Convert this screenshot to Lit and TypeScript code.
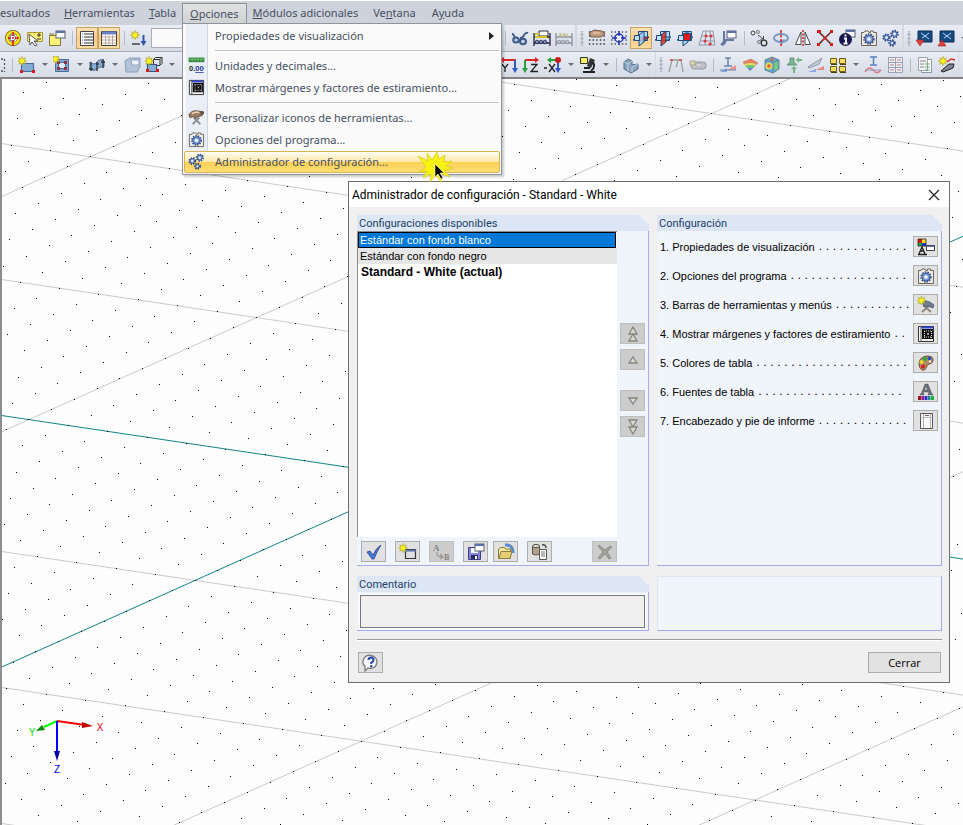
import { LitElement, html, svg, css } from "lit";
import type { TemplateResult } from "lit";
import { customElement, property } from "lit/decorators.js";
import { classMap } from "lit/directives/class-map.js";

type Art = unknown;

/* ---------- shared drawing helpers ---------- */
const gear = (x: number, y: number, r: number) => svg`
  <circle cx=${x} cy=${y} r=${r} fill="none" stroke="#2c4884" stroke-width="1.800" stroke-dasharray="1.500 1.100"/>
  <circle cx=${x} cy=${y} r=${r - 0.8} fill="#7f9bd4" stroke="#3c5a9c" stroke-width="1"/>
  <circle cx=${x} cy=${y} r=${r / 2.6} fill="#eef2fa"/>`;
const star = (x: number, y: number) => svg`
  <path transform="translate(${x} ${y})" d="M0-4.5L1-1.8 3.4-3.2 2-1 4.5 0 2 1 3.2 3.2 1 2 0 4.5-1 2-3.2 3.2-2 1-4.5 0-2-1-3.2-3.2-1-1.8z" fill="#fdf41c" stroke="#a89e20" stroke-width=".6"/>`;
const miniWindow = (x: number, y: number) => svg`
  <rect x=${x} y=${y} width="9" height="7" fill="#fff" stroke="#585e6c"/>
  <path d="M${x} ${y + 1}h9" stroke="#5c70a8" stroke-width="2"/>`;
const planes = (kind: number) => svg`
  <path d="M6.500 2.500h9v9h-9z" fill="#b8d8f4" stroke="#1d4a7c"/>
  <path d="M1 11l5-3h11l-5 4z" fill=${kind === 0 ? "#e32a1c" : "#9cc6ec"} stroke="#1d4a7c"/>
  <path d="M7 6l5-4v11l-5 4z" fill=${kind === 1 ? "#e32a1c" : "#a4cdf2"} fill-opacity=".85" stroke="#1d4a7c"/>
  <path d="M2.500 6.500h5v5h-5z" fill="#c4e0f8" stroke="#1d4a7c"/>
  ${kind === 2 ? svg`<path d="M7.500 4.500h7v7h-7z" fill="#e31818" stroke="#1d4a7c"/>` : ""}`;
const dots = (color: string) => svg`<path d="M1 3h16M1 7h16M1 11h16M1 15h16" stroke=${color} stroke-width="1.400" stroke-dasharray="1.400 2.200"/>`;
const abacus = (c: string, d: string) => svg`
  <path d="M1 4v13M17 4v13M1 8h16M1 14h16" stroke=${d} stroke-width="1.300" fill="none"/>
  <g fill=${c} stroke=${d} stroke-width=".8"><circle cx="4" cy="13" r="1.800"/><circle cx="8" cy="13" r="1.800"/><circle cx="12" cy="13" r="1.800"/></g>`;

const ICONS: Record<string, Art> = {
  target: svg`<circle cx="9" cy="9" r="6" fill="#fff" stroke="#6e5a18" stroke-width="4"/><circle cx="9" cy="9" r="6" fill="none" stroke="#fae21c" stroke-width="2.500"/><circle cx="8.500" cy="9" r="3" fill="#fff" stroke="#666"/><path d="M9 3v4M9 11v6M4 9h3M11 9h4M8 9h2" stroke="#d82020" stroke-width="1.600"/>`,
  note: svg`<path d="M1.500 3.500h15v9h-15z" fill="#fbf07a" stroke="#a89a30"/><path d="M11 6h4M13 4v4M11 10h4" stroke="#333"/><path d="M3 5l1 11 2-3 3 4 2-1-3-4h4z" fill="#fff" stroke="#555"/>`,
  folder: svg`<path d="M1.500 6.500h11v10h-11z" fill="#fbf07a" stroke="#807830"/><path d="M1 5h5" stroke="#807830"/>${miniWindow(8, 2)}`,
  list: svg`<path d="M2.500 2.500h13v14h-13z" fill="#fff" stroke="#444"/><path d="M6 5h9M6 8h9M6 11h9M6 14h9" stroke="#333"/><path d="M4 5h1M4 8h1M4 11h1M4 14h1" stroke="#37c"/>`,
  table: svg`<path d="M1.500 2.500h15v14h-15z" fill="#fff" stroke="#444"/><path d="M2 4h14" stroke="#6a84c8" stroke-width="3"/><path d="M2 8h14M2 11h14M2 14h14M5.500 6v10M9 6v10M12.500 6v10" stroke="#b09880" stroke-width=".8"/>`,
  starload: svg`${star(5, 6)}<path d="M2 15h8" stroke="#444" stroke-width="1.500"/><path d="M13.500 6v7" stroke="#2f55b0" stroke-width="2"/><path d="M10.500 12h6l-3 5z" fill="#2f55b0"/>`,
  glasses: svg`<path d="M1 5q2 0 3 4M9 9q3 0 4-3 2-3 4-2" stroke="#3e5a86" stroke-width="1.800" fill="none"/><ellipse cx="5" cy="11" rx="2.800" ry="2.600" fill="#c2cfe4" stroke="#3e5a86" stroke-width="2"/><ellipse cx="12" cy="12.500" rx="3" ry="2.800" fill="#c2cfe4" stroke="#3e5a86" stroke-width="2"/>`,
  abacus: svg`${abacus("#7c8ec8", "#22263c")}<path d="M6 2h9v5H6z" fill="#fff" stroke="#333"/><path d="M2 5h4M2 8h12" stroke="#d8c030" stroke-width="2"/>`,
  abacusoff: svg`${abacus("#b8c2d4", "#8a909c")}<path d="M4 6h9" stroke="#c8c090" stroke-width="3" stroke-dasharray="3 1"/>`,
  handdots: svg`${dots("#333")}<path d="M1 4l5-3 8 1 3 3-4 3H6L3 8z" fill="#c39a7c" stroke="#5c4434" stroke-width=".8"/><path d="M5 4l7 0" stroke="#ecd2bc"/>`,
  snap: svg`${dots("#555")}<circle cx="9" cy="9" r="4" fill="#eef1f8" stroke="#1a2cb8" stroke-width="1.300"/><path d="M9 2v5M9 11v5M2 9h5M11 9h5" stroke="#1a2cb8" stroke-width="1.300"/>`,
  plane0: planes(0), plane1: planes(1), plane2: planes(2),
  gridpts: svg`<path d="M5 2h10l2 14H1zM3.500 7h12M2.500 12h14M8 2l-1 14M12 2l1 14" fill="none" stroke="#8f97a6"/><g fill="#e03030"><circle cx="8" cy="7" r="1.500"/><circle cx="13" cy="7" r="1.500"/><circle cx="7" cy="12" r="1.500"/><circle cx="12" cy="15" r="1.500"/></g>`,
  dragwin: svg`<path d="M4 2v9h10M1 16l4-5M6 11q-1 4-4 5" stroke="#6379a2" stroke-width="2" fill="none"/>${miniWindow(7, 2)}`,
  moveo: svg`<circle cx="3" cy="4" r="2" fill="none" stroke="#444"/><circle cx="8" cy="3" r="1.500" fill="none" stroke="#777"/><circle cx="14" cy="14" r="2.800" fill="none" stroke="#333" stroke-width="1.300"/><path d="M8 6l5 4M13.500 7v4H10" stroke="#444" fill="none"/><circle cx="9" cy="13" r="1.500" fill="none" stroke="#777"/>`,
  rotate: svg`<ellipse cx="9" cy="9" rx="7" ry="4" fill="none" stroke="#7c9ac8" stroke-width="2"/><path d="M13 10l-3 6-3-4z" fill="#7c9ac8"/><path d="M9 1v16" stroke="#d81c1c" stroke-width="1.500" stroke-dasharray="3 1.500"/>`,
  mirror: svg`<path d="M7 3v12.500H1.500zM11 3v12.500h5.500z" fill="#fff" stroke="#4a4a4a"/><path d="M9 1v16" stroke="#d81c1c" stroke-width="1.500" stroke-dasharray="2 1.500"/>`,
  cross: svg`<path d="M2 2l14 14M16 2L2 16" stroke="#333" stroke-width="1.500"/><path d="M1 1h4v3H1zM14 1h3v3h-3zM1 14h3v3H1zM14 14h3v3h-3z" fill="#e01818"/><path d="M6 6l6 6M12 6l-6 6" stroke="#c03030" stroke-width="1.500"/>`,
  info: svg`${miniWindow(8, 1)}<circle cx="7.500" cy="10.500" r="6.500" fill="#14184c"/><path d="M7.500 5.500v2M6 9.500h2v5M5.500 14.500h4" stroke="#fff" stroke-width="1.800" fill="none"/>`,
  options: svg`<path d="M1.500 5.500v11h15V3.500h-3V2h-3v1.500H9L8 2H5L4 3.500H1.500z" fill="#eeeae2" stroke="#6b6660"/>${gear(9, 10, 4.8)}`,
  gears: svg`${gear(4.5, 8.5, 3.2)}${gear(12.5, 5, 3.4)}${gear(10, 14, 2.8)}`,
  cfgdown: svg`<path d="M3 2h14v11H3z" fill="#174a82" stroke="#0c2c54"/><path d="M6 4l4 3 4-3M7 9l3-2 4 3" stroke="#b9dcf4" fill="none"/><path d="M1 11h8l-4 6z" fill="#e54040" stroke="#a02020" stroke-width=".6"/>`,
  cfgup: svg`<path d="M3 2h14v11H3z" fill="#174a82" stroke="#0c2c54"/><path d="M6 4l4 3 4-3M7 9l3-2 4 3" stroke="#b9dcf4" fill="none"/><path d="M1 17h8l-4-6z" fill="#e54040" stroke="#a02020" stroke-width=".6"/>`,
  dash: svg`<path d="M0 3h4M0 15h4M3.500 3v13" stroke="#555" stroke-dasharray="2 2" stroke-width="1.300"/>`,
  surface: svg`<path d="M3.500 7.500h12v8h-12z" fill="#86add6" stroke="#4b6c94" stroke-width="1.200"/>${star(4, 5)}<path d="M14 14h3v3h-3zM2 14h3v3H2z" fill="#e01818"/>`,
  opening: svg`<path d="M2.500 3.500h13v12h-13z" fill="#7fa8d4" stroke="#4b6c94"/><path d="M5.500 6.500h7v6h-7z" fill="#dfe8f3" stroke="#4b6c94"/><path d="M4 5h3v3H4zM11 5h3v3h-3zM4 11h3v3H4zM11 11h3v3h-3z" fill="#8e3440"/>${star(2.5, 3)}`,
  shell: svg`<path d="M2 6q4 4 7 0t7-1v6q-4-1-7 2t-7 0z" fill="#86add6" stroke="#4b6c94"/><path d="M3 6v9M9 6v9M15 3v9M1 13h4M8 8h3M13 6h4" stroke="#333" stroke-width="1.300"/>`,
  solid: svg`<path d="M2 5l5-3h10v9l-3 5H3z" fill="#b2c4da" stroke="#8a9cb6"/><path d="M8 4h8v5H9z" fill="#eef3f9" stroke="#98a8be"/>`,
  copysolid: svg`<path d="M8.500 3.500l2-2h6.500v6l-2 2H8.500zM8.500 3.500H15V9M15 3.500L17 1.500" fill="none" stroke="#333"/><path d="M2.500 8.500h9v7h-9z" fill="#86add6" stroke="#33567f" stroke-width="1.200"/>${star(4, 5)}<path d="M11 13h3v3h-3zM1 13h3v3H1z" fill="#e01818"/>`,
  axisY: svg`<path d="M3 4h13" stroke="#d82828" stroke-width="2"/><path d="M0 4l4-3v6z" fill="#d82828"/><path d="M15 4v10" stroke="#3058c8" stroke-width="2"/><path d="M12 12h6l-3 5z" fill="#3058c8"/><path d="M2 8l3 4 3-4M5 12v4" stroke="#222" stroke-width="1.300" fill="none"/>`,
  axisZ: svg`<path d="M3 4h12" stroke="#d82828" stroke-width="2"/><path d="M17 4l-4-3v6z" fill="#d82828"/><path d="M3 4v10" stroke="#28a038" stroke-width="2"/><path d="M0 12h6l-3 5z" fill="#28a038"/><path d="M9 8.500h6l-6 7h7" stroke="#222" stroke-width="1.300" fill="none"/>`,
  axisX: svg`<path d="M5 4h8" stroke="#28a038" stroke-width="2"/><path d="M3 4l4-3v6z" fill="#28a038"/><circle cx="14" cy="4" r="3" fill="#c81c1c"/><path d="M14 7v7" stroke="#3058c8" stroke-width="2"/><path d="M11 12h6l-3 5z" fill="#3058c8"/><path d="M0 12h3M5 8l6 8M11 8l-6 8" stroke="#222" stroke-width="1.300"/>`,
  microscope: svg`<path d="M1.500 1.500h7v6h-7z" fill="#fbf06a" stroke="#333"/><path d="M11 2l5 2-4 8-4-2z" fill="#333"/><path d="M14 6q3 5-2 9M4 16h12M5 12h6" stroke="#222" stroke-width="1.800" fill="none"/>`,
  cube: svg`<path d="M2 6l4-3 4 2v4l6-1v5l-7 4-7-4z" fill="#8ba4be" stroke="#52708e"/><path d="M2 6l4 2v7M6 8l4-3M10 11l6-3M10 11v5" stroke="#c4d4e4" fill="none"/>`,
  frame: svg`<path d="M2 16L5 4h9l2 12M11 4l-2 7" stroke="#93a39d" stroke-width="1.300" fill="none"/><path d="M3 3h3v2H3zM12 3h3v2h-3z" fill="#d86060"/>`,
  roller: svg`<rect x="2" y="6" width="15" height="7" rx="3" fill="#c0c4ca" stroke="#92979f"/><path d="M1 5h5v4H1z" fill="#ddd8b0" stroke="#aba48c"/><path d="M7 8h6v2H7z" fill="#eee" stroke="#999" stroke-width=".6"/>`,
  beam: svg`<path d="M6 2h6M9 2v8M5 10h8" stroke="#6a86b0" stroke-width="1.500"/><path d="M1 16l7-4v4z" fill="#8aa6e0"/><path d="M8 14h9V9z" fill="#e89494"/><path d="M1 14h16" stroke="#6a86b0"/>`,
  results: svg`<path d="M2 6l8-3 7 4-8 8z" fill="#5c90d8" stroke="#999" stroke-width=".6"/><path d="M2 6l8-3 7 4-2 1q-5-2-12 0z" fill="#e88058"/><path d="M3 8q7-2 12 0l-1 2q-5-2-10 0z" fill="#ecdc5c"/><path d="M4 10q5-2 10 0l-2 2q-3-1-6 0z" fill="#74c880"/>`,
  iso: svg`<path d="M2 4l7-3 7 3v9l-6 4-8-3z" fill="#58b0d8" stroke="#6c8494"/><path d="M2 4l8 2 6-2M10 6v11" stroke="#6c8494" fill="none"/><circle cx="6" cy="10" r="3.500" fill="#e8dc58"/><circle cx="6" cy="10" r="1.800" fill="#e06040"/><ellipse cx="13" cy="10" rx="2" ry="4" fill="#74cc74"/><circle cx="9" cy="3.500" r="1.500" fill="#e06040"/>`,
  support: svg`<path d="M2 9l3-3V2h4v4l3 3z" fill="#7cb494" stroke="#649a7e"/><path d="M9 12v5M13 4h4" stroke="#68b87e" stroke-width="2"/><path d="M6 13l3-3 3 3zM14 1l-3 3 3 3z" fill="#68b87e"/>`,
  slope: svg`<path d="M1 11L15 2l-3 6-10 4z" fill="#c4ced8" stroke="#8b9bad"/><path d="M1 16l8-3v3z" fill="#8fa3e0"/><path d="M9 14l8-4v4z" fill="#e48888"/>`,
  blocks: svg`<g fill="#f4dc5c" stroke="#6c5c28"><path d="M1.500 2.500h6v5h-6zM10.500 2.500h6v5h-6zM1.500 10.500h6v5h-6zM10.500 10.500h6v5h-6z"/></g><path d="M2 8.500h6M11 8.500h6M2 16.500h6M11 16.500h6" stroke="#4a3d14"/>`,
  wave: svg`<path d="M6 1h7M9.500 1v8M6 9h7" stroke="#5b80be" stroke-width="1.500"/><path d="M1 16q4-7 8-2t8 0" stroke="#e47a7a" stroke-width="1.500" fill="none"/><path d="M1 14h16" stroke="#8898c8"/>`,
  drawers: svg`<path d="M2.500 1.500h14v15h-14zM2 6.500h15M2 11.500h15M9.500 1v16" fill="#eef1f6" stroke="#98a2b4"/><path d="M4 4h4M11 4h4M4 9h4M11 9h4M4 14h4M11 14h4" stroke="#c87886"/>`,
  report: svg`<path d="M5.500 3.500h10v13h-10z" fill="#fff" stroke="#8f97a4"/><path d="M2.500 1.500h9v13h-9z" fill="#f4f4f4" stroke="#9ca3b0"/><path d="M4 5h6M4 8h4M4 11h4" stroke="#888"/><path d="M9 8h5M9 11h5M9 14h5" stroke="#68b078"/>`,
  startool: svg`${star(5, 5)}<path d="M3 15l8-7 5 0-1 4-10 4z" fill="#7c8696" stroke="#222"/><path d="M9 6l4-3 4 1" stroke="#d03030" stroke-width="1.500" fill="none"/>`,
  units: svg`<path d="M1 1h16v4H1z" fill="#5fb860" stroke="#2d7c34" stroke-width=".8"/><path d="M3 3v2M6 3v2M9 3v2M12 3v2M15 3v2" stroke="#1f5a24"/><text x="1" y="15" font-size="8" font-weight="700" font-family="Liberation Sans, sans-serif" fill="#222">0.<tspan fill="#1a2ea8" text-decoration="underline">00</tspan></text>`,
  margins: svg`<path d="M1.500 1.500h15v15h-15z" fill="#f3f3f3" stroke="#333"/><path d="M4 2.500h12" stroke="#3048d8" stroke-width="2"/><path d="M4 1v16" stroke="#555"/><path d="M5 4h11v10H5z" fill="#0a0a0a"/><path d="M7 6h8M7 12h8" stroke="#ddd" stroke-dasharray="1 1"/><path d="M7.500 6v7M14.500 6v7" stroke="#ddd" stroke-dasharray="1 1"/><path d="M10 8l2 2M12 8l-2 2" stroke="#ddd" stroke-width=".7"/>`,
  tools: svg`<path d="M5 16l7-7M13 16L6 9" stroke="#8a8d92" stroke-width="2"/><path d="M1 6q3-5 9-4l6 1-1 4-4 1-3 2-2-2-4 1z" fill="#9a7a60" stroke="#4c3a2c" stroke-width=".8"/><path d="M4 5q4-3 8-1" stroke="#e6cdb0" stroke-width="1.800" fill="none"/><circle cx="15" cy="4" r="2" fill="#59504a"/>`,
  startools: svg`<path d="M5 16l8-7M14 16L6 9" stroke="#8d8a80" stroke-width="2"/><path d="M5 6q5-3 12 3l-1 3-5-2-3 1z" fill="#707c96" stroke="#4c5668" stroke-width=".8"/>${star(4.5, 4.5)}`,
  display: svg`<path d="M1 1h4v4H1z" fill="#e01818"/><path d="M5 1h4v4H5z" fill="#f4e018"/><path d="M1 5h4v3H1z" fill="#18a838"/><path d="M5 5h4v3H5z" fill="#2038d0"/><path d="M1 1h8v7H1z" fill="none" stroke="#222" stroke-width=".8"/><path d="M2 16l3-7 3 7M3 13h4M1 16.500h9" stroke="#222" stroke-width="1.300" fill="none"/><rect x="9.500" y="7.500" width="8" height="5" fill="#fff" stroke="#444"/><path d="M9 8h9" stroke="#3a4c84" stroke-width="1.500"/>`,
  palette: svg`<path d="M2 10q0-7 8-8 7 0 6 5-1 3-4 3-2 1-3 4-1 3-4 2-3-2-3-6z" fill="#b08a62" stroke="#6c543c"/><circle cx="8" cy="5" r="2" fill="#28a838"/><circle cx="12.500" cy="4.500" r="1.800" fill="#2848d8"/><circle cx="4.500" cy="8" r="2" fill="#f0dc28"/><circle cx="6" cy="12.500" r="2" fill="#d82020"/><circle cx="13" cy="7.500" r="1.200" fill="#eee"/>`,
  fontA: svg`<path d="M3 11h1L8 1h3l4 10h1v1h-5v-1h1l-1-2H7l-1 2h1v1H3zM7.500 7h3L9 3.500z" fill="#666c74" stroke="#555" stroke-width=".4"/><path d="M1 13h3v4H1z" fill="#981818"/><path d="M4.500 13h3v4h-3z" fill="#8018a0"/><path d="M8 13h2.500v4H8z" fill="#2030c8"/><path d="M11 13h2.500v4H11z" fill="#188c8c"/><path d="M14 13h3v4h-3z" fill="#20b040"/>`,
  page: svg`<path d="M3.500 1.500h12v15h-12z" fill="#fafafa" stroke="#555"/><path d="M6.500 2v14M3.500 5.500h12M13.500 2v14" stroke="#b4b4b4"/><path d="M8 3.500h4" stroke="#666"/>`,
  check: svg`<path d="M2 9l3-1 3 4q3-7 8-10-4 6-7 14H7z" fill="#4c78d0" stroke="#24408c" stroke-width=".8"/>`,
  newwin: svg`<path d="M6.500 6.500h10v9h-10z" fill="#dfe0e4" stroke="#333" stroke-width="1.200"/><path d="M6 7.500h11" stroke="#5a6ca8" stroke-width="2"/>${star(4, 5)}`,
  rename: svg`<text x="0" y="8" font-size="9" font-family="Liberation Serif, serif" font-weight="700" fill="#858585">A</text><text x="11" y="17" font-size="8" font-family="Liberation Serif, serif" font-weight="700" fill="#858585">B</text><path d="M4 9q-1 5 5 5M7 11l3 3-3 2" stroke="#999" stroke-width="1.300" fill="none"/>`,
  save: svg`<path d="M1.500 4.500h12v12h-12z" fill="#8484dc" stroke="#3c3c84"/><path d="M4 5h7v5H4z" fill="#fff"/><path d="M4 12h7v4H4z" fill="#2a2a60"/><path d="M8 13h2v3H8z" fill="#fff"/>${miniWindow(8, 1)}`,
  open: svg`<path d="M8 2q8-1 8 8" stroke="#5c8cc8" stroke-width="3" fill="none"/><path d="M1.500 15.500V6l2-1.500h4l1 1.500h5v9.500z" fill="#f4e8a4" stroke="#8c7c38"/><path d="M2 15.500l2-7h11l-2 7z" fill="#e2cf74" stroke="#8c7c38"/>`,
  copydoc: svg`<path d="M1.500 3v8q3 2 7 0V3" fill="#b4a08a" stroke="#555"/><ellipse cx="5" cy="3" rx="3.500" ry="1.500" fill="#f4f0ea" stroke="#444"/><path d="M8.500 6.500h7v10h-7z" fill="#fff" stroke="#555"/><path d="M10 9h4M10 11h4M10 13h4" stroke="#777"/><path d="M11 2q4-1 4 3" stroke="#444" stroke-width="1.500" fill="none"/>`,
  remove: svg`<path d="M3 2l6 5 5-4 2 1-5 5 4 6-2 1-4-5-5 5-2-1 5-6-5-6z" fill="#a0a09a" stroke="#85857e" stroke-width=".8"/>`,
  help: svg`<path d="M9 1.500a6.500 6.500 0 1 1-3 12.500l-3 3v-4.500A6.500 6.500 0 0 1 9 1.500z" fill="#f4f6fa" stroke="#7c7c7c" stroke-width="1.300"/><path d="M6.500 6q0-2.500 2.500-2.500T11.500 6q0 1.500-2.300 2.800V10" stroke="#2848a8" stroke-width="2" fill="none"/><circle cx="9.200" cy="12.300" r="1.200" fill="#2848a8"/>`,
  top: svg`<g fill="#d8d8d0" stroke="#85857e" stroke-width="1.300"><path d="M9 9l4 7H5z"/><path d="M9 2l4 7H5z"/></g>`,
  up: svg`<path d="M9 6l4 6H5z" fill="#dcdcd4" stroke="#85857e" stroke-width="1.300"/>`,
  down: svg`<path d="M9 12l4-6H5z" fill="#dcdcd4" stroke="#85857e" stroke-width="1.300"/>`,
  bottom: svg`<g fill="#d8d8d0" stroke="#85857e" stroke-width="1.300"><path d="M9 9l4-7H5z"/><path d="M9 16l4-7H5z"/></g>`,
};

const icon = (name: string): TemplateResult =>
  html`<svg width="18" height="18" viewBox="0 0 18 18" aria-hidden="true">${ICONS[name]}</svg>`;

/* ---------- work plane ---------- */
const ORIGIN = [420.7, 399.4];
const U = [39.38, 5.88];
const V = [22.76, -10.2];
const EXTENT = [1920, 1100];

const plane = () => {
  let points = "";
  const lines: unknown[] = [];
  for (let i = -60; i <= 60; i++) {
    for (let j = -110; j <= 110; j++) {
      const x = Math.round(ORIGIN[0] + i * U[0] + j * V[0] - 0.5);
      const y = Math.round(ORIGIN[1] + i * U[1] + j * V[1] - 0.5);
      if (x >= 0 && y >= 0 && x < EXTENT[0] && y < EXTENT[1]) points += `M${x} ${y}h1v1h-1z`;
    }
  }
  for (let k = -100; k <= 100; k += 10) {
    const cls = k === 0 ? "axis" : "grid";
    const seg = (d: number[], s: number[]) => svg`<line class=${cls}
      x1=${ORIGIN[0] + s[0] * k - 120 * d[0]} y1=${ORIGIN[1] + s[1] * k - 120 * d[1]}
      x2=${ORIGIN[0] + s[0] * k + 120 * d[0]} y2=${ORIGIN[1] + s[1] * k + 120 * d[1]}/>`;
    lines.push(seg(U, V), seg(V, U));
  }
  return svg`${lines}<path class="points" d=${points}/>`;
};

@customElement("work-view")
class WorkView extends LitElement {
  static styles = css`
    :host { display: block; overflow: hidden; background: #fdfdfd; border-top: 2px solid #808286; border-left: 2px solid #8b8d91; }
    svg { display: block; width: 100%; height: 100%; }
    .grid { stroke: #cbcbcb; }
    .axis { stroke: #148484; }
    .points { fill: #000; shape-rendering: crispEdges; }
    text { font: 10px "Liberation Sans", sans-serif; text-anchor: middle; }
  `;
  render() {
    return html`<svg role="img" aria-label="Plano de trabajo">
      ${plane()}
      <g transform="translate(55 642)" stroke-width="2">
        <path d="M0 0L28 4" stroke="#f00"/><path d="M25 1l11 4-11 2z" fill="#c00000"/>
        <path d="M0 0L-13 6" stroke="#0f0"/><path d="M-21 10l6-6 3 5z" fill="#008a00"/>
        <path d="M0 0v31" stroke="#00f"/><path d="M-3 30h6l-3 10z" fill="#0000a8"/>
        <text x="43" y="10" fill="#f00">X</text><text x="-25" y="15" fill="#0d0">Y</text><text x="0" y="52" fill="#00f">Z</text>
      </g>
    </svg>`;
  }
}

/* ---------- toolbars: "|" separator, ":" grip, "v" drop-down arrow, "*" pressed ---------- */
@customElement("tool-group")
class ToolGroup extends LitElement {
  @property() items = "";
  static styles = css`
    :host { display: flex; align-items: center; flex: none; height: 100%; }
    button { flex: none; box-sizing: border-box; width: 22px; height: 22px; padding: 0; border: 1px solid transparent; background: none; display: flex; align-items: center; justify-content: center; }
    button.on { border-color: #c8a460; background: linear-gradient(#fde3b6, #fbc987 50%, #fddca0); }
    button.narrow { width: 8px; justify-content: flex-start; overflow: hidden; }
    svg { flex: none; }
    .sep { flex: none; width: 8px; height: 14px; background: linear-gradient(#b4bac6, #b4bac6) center / 1px 100% no-repeat; }
    .grip { flex: none; width: 9px; height: 15px; background: radial-gradient(circle, #aab0bc 1px, transparent 2px) center / 4px 4px repeat-y; }
    .caret { flex: none; width: 13px; }
    .caret::before { content: ""; display: block; margin: auto; width: 0; border: 3px solid transparent; border-top-color: #666c78; border-bottom: 0; }
    input { width: 96px; height: 20px; box-sizing: border-box; margin-left: 1px; border: 1px solid #a8aeba; background: #fafafa; }
  `;
  render() {
    return this.items.split(" ").map((item) => {
      if (item === "|") return html`<span class="sep"></span>`;
      if (item === ":") return html`<span class="grip"></span>`;
      if (item === "v") return html`<span class="caret"></span>`;
      if (item === "input") return html`<input aria-label="Caso de carga" />`;
      const on = item.startsWith("*");
      const name = on ? item.slice(1) : item;
      return html`<button class=${classMap({ on, narrow: name === "dash" })} aria-label=${name}>${icon(name)}</button>`;
    });
  }
}

const MENUS: [string, string, string][] = [
  ["esultados", "", ""], ["", "H", "erramientas"], ["", "T", "abla"], ["", "O", "pciones"],
  ["", "M", "ódulos adicionales"], ["Ve", "n", "tana"], ["A", "y", "uda"],
];
const ENTRIES: ([string, string] | null)[] = [
  ["", "Propiedades de visualización"], null,
  ["units", "Unidades y decimales..."], ["margins", "Mostrar márgenes y factores de estiramiento..."], null,
  ["tools", "Personalizar iconos de herramientas..."], ["options", "Opciones del programa..."],
  ["gears", "Administrador de configuración..."],
];

@customElement("menu-bar")
class MenuBar extends LitElement {
  static styles = css`
    :host { display: flex; box-sizing: border-box; height: 25px; padding-top: 2px; border-top: 1px solid #fff; background: #cdd2db; color: #465062; font: 11px/20px "Noto Sans", "Open Sans", sans-serif; }
    .item { position: relative; }
    button { display: block; font: inherit; color: inherit; border: 0; background: none; text-align: left; }
    .top { height: 20px; padding: 0 7px; white-space: nowrap; }
    .item:first-child .top { padding-left: 0; }
    .item:nth-child(n + 6) .top { padding: 0 8px; }
    .top.open { margin: 0 -1px; border: 1px solid #8a8f98; border-bottom: 0; background: linear-gradient(#e2e2e3, #d0d1d3); line-height: 18px; }
    .popup { position: absolute; z-index: 2; top: 20px; left: -1px; width: 316px; padding: 1px; border: 1px solid #8f949c; box-shadow: 2px 2px 2px #0003; background: linear-gradient(to right, transparent 3px, #e9eef7 3px, #e9eef7 24px, #cdd4e0 24px, #cdd4e0 25px, transparent 25px), #fafafa; }
    .entry { position: relative; display: flex; align-items: center; box-sizing: border-box; width: 100%; height: 22px; padding: 0 5px 0 3px; gap: 9px; border: 1px solid transparent; border-radius: 2px; }
    .entry .pic { width: 18px; height: 18px; }
    .pic svg { display: block; width: 17px; height: 17px; }
    .label { flex: 1; white-space: nowrap; }
    .more { border: 4px solid transparent; border-left: 5px solid #222; border-right: 0; }
    .entry.hot { border-color: #d8b454; background: linear-gradient(#fffdf2, #fee9ac 48%, #fdd054 50%, #fddc74); }
    .rule { height: 1px; margin: 3px 1px 4px 31px; background: #c4c4c4; }
    .burst { position: absolute; left: 232px; top: -1px; overflow: visible; }
  `;
  render() {
    return MENUS.map(([a, k, b]) => {
      const open = k === "O";
      return html`<div class="item">
        <button class=${classMap({ top: true, open })}>${a}<u>${k}</u>${b}</button>
        ${open ? html`<div class="popup" role="menu">
          ${ENTRIES.map((e, i) => e === null
            ? html`<div class="rule"></div>`
            : html`<button role="menuitem" class=${classMap({ entry: true, hot: e[0] === "gears" })}>
                <span class="pic">${e[0] ? icon(e[0]) : ""}</span><span class="label">${e[1]}</span>
                ${i === 0 ? html`<span class="more"></span>` : ""}
                ${e[0] === "gears" ? html`<svg class="burst" width="36" height="32" viewBox="0 0 36 32" aria-hidden="true">
                  <path d="M1 5l10 5-1-8 5 7 5-8 2 7 6-4-1 7 8-1-6 5 7 2-8 3 5 6-8-3-1 8-5-7-6 7 1-8-8 4 4-7-8 1 7-5z" fill="#f8f214" stroke="#d8cc28" stroke-width=".8"/>
                  <path d="M18 13v13l3-3 3 5 2-1-3-5h4z" fill="#000" stroke="#fff" stroke-width=".6"/></svg>` : ""}
              </button>`)}
        </div>` : ""}
      </div>`;
    });
  }
}

/* ---------- configuration manager ---------- */
const SETTINGS: [string, number, string][] = [
  ["1. Propiedades de visualización", 13, "display"],
  ["2. Opciones del programa", 17, "options"],
  ["3. Barras de herramientas y menús", 11, "startools"],
  ["4. Mostrar márgenes y factores de estiramiento", 2, "margins"],
  ["5. Colores de tabla", 22, "palette"],
  ["6. Fuentes de tabla", 21, "fontA"],
  ["7. Encabezado y pie de informe", 13, "page"],
];

@customElement("config-dialog")
class ConfigDialog extends LitElement {
  static styles = css`
    :host { display: block; box-sizing: border-box; border: 1px solid #6e6e6e; background: #f0f0f0; color: #000; font: 11px/16px "Liberation Sans", sans-serif; }
    header { display: flex; align-items: center; justify-content: space-between; height: 25px; padding: 0 9px 0 3px; background: #fff; font: 12px/16px Roboto, sans-serif; }
    h1, h2 { margin: 0; font: inherit; }
    button { font: inherit; color: inherit; box-sizing: border-box; padding: 0; border: 1px solid #adadad; background: #e1e1e1; }
    header button { width: 12px; height: 12px; border: 0; background: none; display: flex; }
    .body { display: grid; grid-template-columns: minmax(0, 292fr) minmax(0, 285fr); gap: 10px 8px; padding: 8px 7px 8px 8px; }
    .panel { display: flex; flex-direction: column; background: #f0f4fb; border: solid #a9a9ea; border-width: 0 1px 1px 0; clip-path: polygon(0 0, calc(100% - 10px) 0, 100% 10px, 100% 100%, 0 100%); }
    .panel.plain { clip-path: none; border: 1px solid #c4cdf0; border-color: #dde6f5 #a9a9ea #a9a9ea #dde6f5; }
    h2 { height: 16px; padding-left: 2px; margin-right: -1px; background: #dce6f5; color: #1f3f68; font: 11px/17px Roboto, sans-serif; }
    .main { display: grid; grid-template-columns: 1fr 31px; }
    .list { height: 305px; margin: 0; padding: 0; list-style: none; background: #fff; border: solid #8c8c8c; border-width: 1px 0 0 1px; }
    .list li { height: 16px; box-sizing: border-box; padding-left: 2px; line-height: 16px; }
    .list .sel { margin-right: 1px; padding-left: 1px; border: 1px solid #000; background: #0078d7; color: #fff; line-height: 14px; }
    .list .alt { background: #e6e6e6; }
    .list .cur { padding-left: 3px; font-size: 12px; font-weight: 700; }
    .sq { display: flex; align-items: center; justify-content: center; width: 25px; height: 21px; flex: none; }
    .sq:disabled { background: #cccccc; border-color: #bfbfbf; }
    .order { display: flex; flex-direction: column; align-items: flex-start; gap: 5px; padding: 92px 0 0 3px; }
    .order .gap { margin-top: 15px; }
    .actions { display: flex; gap: 9px; padding: 4px 31px 3px 4px; }
    .actions .tight { margin-left: -4px; }
    .actions .last { margin-left: auto; }
    .settings { display: flex; flex-direction: column; gap: 8px; padding: 5px 3px 0 3px; }
    .row { display: flex; align-items: center; height: 21px; white-space: nowrap; }
    .row label { flex: none; margin-top: 1px; }
    .row .sq { margin-left: auto; }
    .lead { margin: 1px 0 0 4px; font: 11px/16px "DejaVu Sans", sans-serif; }
    textarea { height: 33px; box-sizing: border-box; margin: 3px 3px 2px; padding: 2px; resize: none; border: 1px solid #787878; outline: 1px solid #fff; background: #f0f0f0; }
    footer { display: flex; justify-content: space-between; margin: 0 7px 0 8px; padding: 12px 1px 9px; border-top: 1px solid #9c9c9c; box-shadow: inset 0 1px #fff; }
    .close { width: 73px; height: 21px; font: 11px/16px "Open Sans", sans-serif; }
  `;
  render() {
    return html`
      <header><h1>Administrador de configuración - Standard - White</h1>
        <button aria-label="Cerrar ventana"><svg width="12" height="12" viewBox="0 0 12 12"><path d="M1 1l10 10M11 1L1 11" stroke="#222" stroke-width="1.200"/></svg></button></header>
      <div class="body">
        <section class="panel"><h2>Configuraciones disponibles</h2>
          <div class="main">
            <ul class="list"><li class="sel">Estándar con fondo blanco</li><li class="alt">Estándar con fondo negro</li><li class="cur">Standard - White (actual)</li></ul>
            <div class="order">
              ${["top", "up", "down", "bottom"].map((n) => html`<button class=${classMap({ sq: true, gap: n === "down" })} disabled aria-label=${n}>${icon(n)}</button>`)}
            </div>
          </div>
          <div class="actions">
            ${["check", "newwin", "rename", "save", "open", "copydoc", "remove"].map((n) => html`<button
              class=${classMap({ sq: true, tight: n === "open", last: n === "remove" })} ?disabled=${n === "rename" || n === "remove"} aria-label=${n}>${icon(n)}</button>`)}
          </div>
        </section>
        <section class="panel"><h2>Configuración</h2>
          <div class="settings">
            ${SETTINGS.map(([text, n, pic]) => html`<div class="row"><label for=${pic}>${text}</label>
              <span class="lead" aria-hidden="true">${Array(n).fill(".").join(" ")}</span><button class="sq" id=${pic}>${icon(pic)}</button></div>`)}
          </div>
        </section>
        <section class="panel"><h2><label for="comment">Comentario</label></h2><textarea id="comment"></textarea></section>
        <section class="panel plain"></section>
      </div>
      <footer><button class="sq" aria-label="Ayuda">${icon("help")}</button><button class="close">Cerrar</button></footer>`;
  }
}

@customElement("app-root")
class AppRoot extends LitElement {
  static styles = css`
    :host { position: relative; display: flex; flex-direction: column; height: 100vh; overflow: hidden; background: #cdd2db; }
    menu-bar { flex: none; }
    .bar { flex: none; display: flex; box-sizing: border-box; height: 26px; overflow: hidden; background: linear-gradient(#eaedf5, #d6dbe6); }
    .bar + .bar { border-top: 1px solid #a6abb5; }
    .bar tool-group { border-right: 2px solid #d3d8e2; box-sizing: border-box; }
    .one .first { width: 501px; padding-left: 2px; }
    .two .first { width: 498px; }
    .two tool-group + tool-group { border-right-width: 1px; }
    work-view { flex: 1; min-height: 0; }
    config-dialog { position: absolute; left: 348px; top: 181px; width: 602px; }
  `;
  render() {
    return html`
      <menu-bar></menu-bar>
      <div class="bar one">
        <tool-group class="first" items="target note folder | *list *table | starload input"></tool-group>
        <tool-group items="| glasses abacus abacusoff"></tool-group>
        <tool-group items=": handdots snap *plane0 plane1 plane2 gridpts dragwin | moveo rotate mirror cross info options gears"></tool-group>
        <tool-group items=": cfgdown cfgup v"></tool-group>
      </div>
      <div class="bar two">
        <tool-group class="first" items="dash | surface v opening v shell v solid copysolid v"></tool-group>
        <tool-group items="axisY axisZ axisX v microscope v | cube v"></tool-group>
        <tool-group items=": frame roller | beam results iso support slope blocks v wave drawers | report startool"></tool-group>
      </div>
      <work-view></work-view>
      <config-dialog></config-dialog>`;
  }
}
